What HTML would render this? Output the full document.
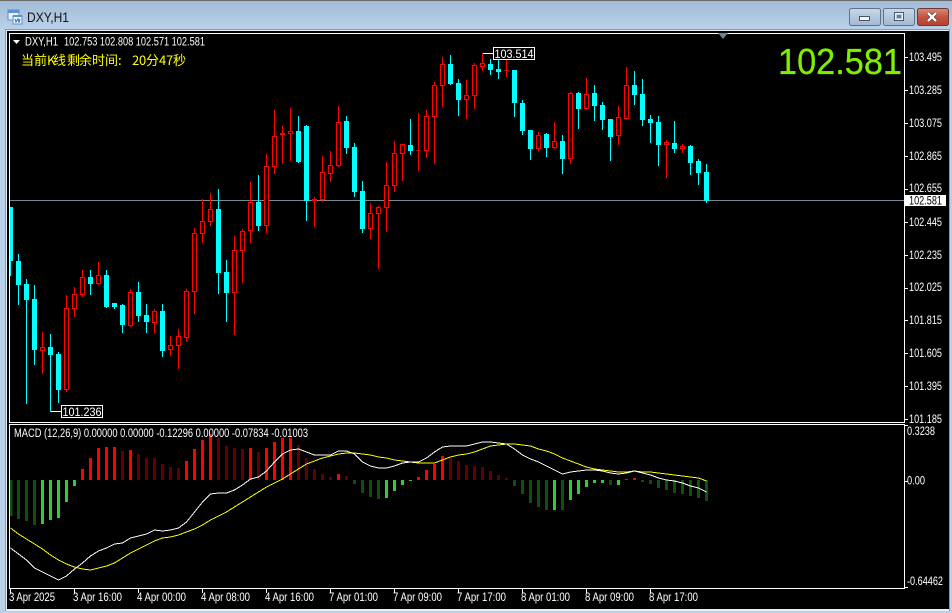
<!DOCTYPE html>
<html>
<head>
<meta charset="utf-8">
<title>DXY,H1</title>
<style>
html,body{margin:0;padding:0;background:#b8d0e8;}
svg{display:block;}
text{font-family:"Liberation Sans","Noto Sans CJK SC",sans-serif;}
</style>
</head>
<body>
<svg width="952" height="613" viewBox="0 0 952 613" xmlns="http://www.w3.org/2000/svg">
<defs>
<linearGradient id="tb" x1="0" y1="0" x2="0" y2="1"><stop offset="0" stop-color="#a2bbd6"/><stop offset="1" stop-color="#b9d1e9"/></linearGradient>
<linearGradient id="btn" x1="0" y1="0" x2="0" y2="1"><stop offset="0" stop-color="#c9d8e8"/><stop offset=".5" stop-color="#b4c8dc"/><stop offset="1" stop-color="#a0b8d2"/></linearGradient>
<linearGradient id="cls" x1="0" y1="0" x2="0" y2="1"><stop offset="0" stop-color="#d98a7a"/><stop offset=".5" stop-color="#c4533f"/><stop offset="1" stop-color="#b8402e"/></linearGradient>
</defs>
<rect width="952" height="613" fill="#b8d0e8"/>
<rect width="952" height="30" fill="url(#tb)"/>
<rect width="952" height="1" fill="#6c6c6c"/>
<rect x="5" y="29" width="945" height="582" fill="#8e9aa6"/>
<rect x="6" y="30" width="943" height="581" fill="#e8eef4"/>
<rect x="7" y="31" width="942" height="578" fill="#000"/>

<!-- title icon -->
<g shape-rendering="crispEdges">
<rect x="8" y="10" width="11" height="10" fill="#e6f0fb" stroke="#5b93cf"/>
<rect x="8" y="10" width="11" height="3" fill="#5b93cf"/>
<rect x="13" y="16" width="9" height="8" fill="#f2f7fd" stroke="#5b93cf"/>
<rect x="13" y="15" width="9" height="2" fill="#5b93cf"/>
<path d="M15 19l1 3 2-3 1 3 1-3" fill="none" stroke="#3c78b8"/>
</g>
<text x="27" y="22" font-size="14" fill="#141414" textLength="42" lengthAdjust="spacingAndGlyphs">DXY,H1</text>

<!-- window buttons -->
<rect x="849.5" y="8.5" width="31" height="17" rx="2" fill="url(#btn)" stroke="#5f7289"/>
<rect x="859.5" y="16.5" width="10" height="4" fill="#f2f5f8" stroke="#48586a"/>
<rect x="883.5" y="8.5" width="31" height="17" rx="2" fill="url(#btn)" stroke="#5f7289"/>
<rect x="894.5" y="12.5" width="9" height="8" fill="none" stroke="#48586a" stroke-width="1"/>
<rect x="895.5" y="13.5" width="7" height="6" fill="none" stroke="#f2f5f8" stroke-width="1"/>
<rect x="897" y="15" width="4" height="3" fill="#6b7d90"/>
<rect x="917.5" y="8.5" width="31" height="17" rx="2" fill="url(#cls)" stroke="#6e3a34"/>
<path d="M928 13l8 8M936 13l-8 8" stroke="#4d2a26" stroke-width="3.6"/>
<path d="M928 13l8 8M936 13l-8 8" stroke="#fff" stroke-width="2.4"/>

<g shape-rendering="crispEdges">
<!-- price line -->
<path d="M10 200.5H904" stroke="#778899" fill="none"/>

<!-- MACD histogram -->
<g fill="none" stroke-width="3">
<path stroke="#0f500f" d="M11 480V516M18.5 480V519M26.5 480V521M34.5 480V525M354.5 480V484M362.5 480V493M370.5 480V497M378.5 480V499M514.5 480V486M522.5 480V494M530.5 480V503M538.5 480V507M546.5 480V510M562.5 480V510M610.5 480V485M642.5 480V482M650.5 480V484M658.5 480V488M666.5 480V490M674.5 480V493M682.5 480V494M690.5 480V496M698.5 480V498M706.5 480V501"/>
<path stroke="#32cd32" d="M42.5 480V524M50.5 480V520M58.5 480V518M66.5 480V502M74.5 480V486M386.5 480V498M394.5 480V491M402.5 480V485M410.5 480V481M554.5 480V510M570.5 480V500M578.5 480V494M586.5 480V487M594.5 480V483M602.5 480V483M618.5 480V485"/>
<path stroke="#ff0000" d="M82.5 480V469M90.5 480V458M98.5 480V448M106.5 480V447M114.5 480V447M130.5 480V450M186.5 480V461M194.5 480V449M202.5 480V440M210.5 480V434M250.5 480V448M266.5 480V448M274.5 480V442M282.5 480V438M290.5 480V438M338.5 480V474M418.5 480V477M426.5 480V470M434.5 480V464M442.5 480V456M626.5 480V479M634.5 480V478"/>
<path stroke="#620000" d="M122.5 480V451M138.5 480V454M146.5 480V458M154.5 480V458M162.5 480V464M170.5 480V467M178.5 480V468M218.5 480V438M226.5 480V446M234.5 480V448M242.5 480V449M258.5 480V452M298.5 480V445M306.5 480V458M314.5 480V469M322.5 480V474M330.5 480V477M346.5 480V476M450.5 480V458M458.5 480V461M466.5 480V465M474.5 480V466M482.5 480V467M490.5 480V471M498.5 480V475M506.5 480V478"/>
</g>
<!-- MACD lines -->
<polyline fill="none" stroke="#ffff00" points="10.5,528 18.5,534 26.5,539 34.5,544 42.5,549 50.5,555 58.5,560 66.5,564 74.5,567 82.5,569 90.5,570 98.5,568 106.5,566 114.5,563 122.5,558 130.5,553 138.5,549 146.5,545 154.5,541 162.5,538 170.5,537 178.5,535 186.5,532 194.5,529 202.5,525 210.5,520 218.5,516 226.5,512 234.5,507 242.5,502 250.5,497 258.5,492 266.5,487 274.5,483 282.5,479 290.5,474 298.5,469 306.5,464 314.5,461 322.5,458 330.5,456 338.5,454 346.5,453 354.5,453 362.5,454 370.5,455 378.5,457 386.5,458 394.5,460 402.5,461 410.5,462 418.5,463 426.5,463 434.5,463 442.5,460 450.5,457 458.5,455 466.5,454 474.5,452 482.5,449 490.5,446 498.5,445 506.5,444 514.5,444 522.5,445 530.5,446 538.5,449 546.5,451 554.5,454 562.5,458 570.5,461 578.5,464 586.5,467 594.5,469 602.5,470 610.5,471 618.5,472 626.5,472 634.5,471 642.5,472 650.5,472 658.5,473 666.5,474 674.5,475 682.5,476 690.5,477 698.5,478 706.5,481"/>
<polyline fill="none" stroke="#ffffff" points="10.5,548 18.5,554 26.5,560 34.5,568 42.5,572 50.5,576 58.5,580 66.5,576 74.5,569 82.5,563 90.5,556 98.5,551 106.5,548 114.5,544 122.5,543 130.5,538 138.5,536 146.5,534 154.5,530 162.5,531 170.5,530 178.5,528 186.5,522 194.5,512 202.5,502 210.5,494 218.5,493 226.5,493 234.5,490 242.5,485 250.5,479 258.5,477 266.5,471 274.5,462 282.5,454 290.5,450 298.5,449 306.5,452 314.5,455 322.5,455 330.5,455 338.5,451 346.5,451 354.5,454 362.5,462 370.5,466 378.5,468 386.5,468 394.5,466 402.5,463 410.5,462 418.5,462 426.5,458 434.5,452 442.5,447 450.5,446 458.5,446 466.5,446 474.5,444 482.5,442 490.5,442 498.5,443 506.5,444 514.5,449 522.5,455 530.5,459 538.5,462 546.5,466 554.5,470 562.5,474 570.5,472 578.5,471 586.5,470 594.5,470 602.5,471 610.5,473 618.5,474 626.5,473 634.5,471 642.5,473 650.5,475 658.5,478 666.5,480 674.5,481 682.5,483 690.5,486 698.5,488 706.5,492"/>

<!-- leader lines for high/low labels -->
<path d="M482.5 53.5H494M50.5 411.5H62" stroke="#fff" fill="none"/>

<!-- red wicks -->
<path fill="none" stroke="#ff0000" d="M42.5 332V374M66.5 295V392M74.5 287V317M82.5 270V297M98.5 262V285M130.5 289V327M154.5 309V333M170.5 336V356M178.5 329V369M186.5 289V342M194.5 228V314M202.5 199V243M210.5 193V226M234.5 236V335M242.5 229V283M250.5 182V243M266.5 154V233M274.5 110V174M282.5 126V164M290.5 108V161M314.5 197V227M322.5 156V202M330.5 151V182M338.5 106V167M370.5 203V239M378.5 206V269M386.5 162V232M394.5 141V192M402.5 144V181M418.5 113V171M426.5 110V158M434.5 82V164M442.5 57V107M466.5 80V119M474.5 63V109M482.5 53V71M506.5 57V77M538.5 132V151M554.5 122V149M570.5 92V164M586.5 78V110M618.5 106V145M626.5 67V120M666.5 140V178M682.5 144V153"/>
<!-- red bodies -->
<path fill="#000" stroke="#ff0000" d="M40.5 347.5h4V350.5h-4zM64.5 308.5h4V389.5h-4zM72.5 294.5h4V308.5h-4zM80.5 277.5h4V294.5h-4zM96.5 275.5h4V283.5h-4zM128.5 292.5h4V325.5h-4zM152.5 311.5h4V322.5h-4zM168.5 345.5h4V349.5h-4zM176.5 336.5h4V345.5h-4zM184.5 291.5h4V337.5h-4zM192.5 233.5h4V291.5h-4zM200.5 221.5h4V233.5h-4zM208.5 209.5h4V221.5h-4zM232.5 250.5h4V292.5h-4zM240.5 231.5h4V250.5h-4zM248.5 202.5h4V230.5h-4zM264.5 166.5h4V225.5h-4zM272.5 136.5h4V166.5h-4zM280.5 133.5h4V134.5h-4zM288.5 131.5h4V133.5h-4zM312.5 199.5h4V200.5h-4zM320.5 172.5h4V199.5h-4zM328.5 165.5h4V173.5h-4zM336.5 122.5h4V165.5h-4zM368.5 213.5h4V228.5h-4zM376.5 207.5h4V213.5h-4zM384.5 185.5h4V207.5h-4zM392.5 153.5h4V185.5h-4zM400.5 144.5h4V153.5h-4zM416.5 150.5h4V150.5h-4zM424.5 116.5h4V150.5h-4zM432.5 85.5h4V116.5h-4zM440.5 64.5h4V85.5h-4zM464.5 95.5h4V99.5h-4zM472.5 65.5h4V95.5h-4zM480.5 63.5h4V66.5h-4zM504.5 70.5h4V70.5h-4zM536.5 135.5h4V148.5h-4zM552.5 141.5h4V147.5h-4zM568.5 93.5h4V158.5h-4zM584.5 94.5h4V108.5h-4zM616.5 117.5h4V135.5h-4zM624.5 85.5h4V118.5h-4zM664.5 142.5h4V144.5h-4zM680.5 146.5h4V148.5h-4z"/>
<!-- cyan wicks -->
<path fill="none" stroke="#00ffff" d="M10.5 207V276M18.5 254V305M26.5 279V404M34.5 285V365M50.5 334V412M58.5 352V403M90.5 270V295M106.5 270V308M114.5 303V309M122.5 304V333M138.5 282V322M146.5 304V333M162.5 304V357M218.5 189V294M226.5 260V322M258.5 175V231M298.5 116V163M306.5 125V221M346.5 116V154M354.5 143V197M362.5 181V233M410.5 119V155M450.5 55V85M458.5 79V116M490.5 59V75M498.5 59V79M514.5 70V117M522.5 100V135M530.5 130V160M546.5 133V157M562.5 135V174M578.5 92V129M594.5 85V121M602.5 102V130M610.5 119V161M634.5 71V105M642.5 79V126M650.5 115V143M658.5 116V166M674.5 121V153M690.5 145V175M698.5 159V185M706.5 164V203"/>
<!-- cyan bodies -->
<path fill="#00ffff" d="M10 207h3V261h-3zM16 261h5V285h-5zM24 284h5V300h-5zM32 299h5V350h-5zM48 347h5V355h-5zM56 354h5V390h-5zM88 277h5V284h-5zM104 275h5V307h-5zM112 303h5V307h-5zM120 305h5V325h-5zM136 292h5V316h-5zM144 315h5V322h-5zM160 311h5V351h-5zM216 209h5V273h-5zM224 272h5V293h-5zM256 202h5V226h-5zM296 131h5V162h-5zM304 126h5V201h-5zM344 121h5V148h-5zM352 147h5V192h-5zM360 191h5V229h-5zM408 145h5V151h-5zM448 64h5V84h-5zM456 83h5V100h-5zM488 64h5V70h-5zM496 69h5V72h-5zM512 70h5V103h-5zM520 103h5V131h-5zM528 130h5V149h-5zM544 134h5V148h-5zM560 141h5V159h-5zM576 93h5V109h-5zM592 93h5V106h-5zM600 105h5V120h-5zM608 119h5V137h-5zM632 85h5V95h-5zM640 94h5V120h-5zM648 119h5V123h-5zM656 122h5V145h-5zM672 143h5V149h-5zM688 146h5V163h-5zM696 161h5V173h-5zM704 172h5V201h-5z"/>

<!-- frames -->
<path fill="none" stroke="#fff" d="M9.5 33.5H904.5V422.5H9.5zM9.5 424.5H904.5V588.5H9.5z"/>
<!-- price ticks -->
<path fill="none" stroke="#fff" d="M905 57.5h3M905 90.5h3M905 123.5h3M905 156.5h3M905 189.5h3M905 222.5h3M905 255.5h3M905 288.5h3M905 320.5h3M905 353.5h3M905 386.5h3M905 419.5h3M905 425.5h3M905 481.5h3M905 587.5h3"/>
<!-- time ticks -->
<path fill="none" stroke="#fff" d="M10.5 589v4M74.5 589v4M138.5 589v4M202.5 589v4M266.5 589v4M330.5 589v4M394.5 589v4M458.5 589v4M522.5 589v4M586.5 589v4M650.5 589v4"/>
<!-- label boxes -->
<rect x="493.5" y="47.5" width="41" height="12" fill="#000" stroke="#fff"/>
<rect x="61.5" y="405.5" width="41" height="12" fill="#000" stroke="#fff"/>
<rect x="905" y="195" width="41" height="11" fill="#fff"/>
</g>

<polygon points="13,40 20,40 16.5,44" fill="#fff"/>
<polygon points="718,33 728,33 723,39" fill="#6f8296"/>

<g fill="#fff" font-size="11.5">
<text x="25" y="45.5" textLength="33" lengthAdjust="spacingAndGlyphs">DXY,H1</text>
<text x="64" y="45.5" textLength="141" lengthAdjust="spacingAndGlyphs">102.753 102.808 102.571 102.581</text>
<text x="14" y="437" textLength="294" lengthAdjust="spacingAndGlyphs">MACD (12,26,9) 0.00000 0.00000 -0.12296 0.00000 -0.07834 -0.01003</text>

<text x="494.5" y="58" font-size="12" textLength="39" lengthAdjust="spacingAndGlyphs">103.514</text>
<text x="62.5" y="416" font-size="12" textLength="39" lengthAdjust="spacingAndGlyphs">101.236</text>

<text x="909" y="61" textLength="33" lengthAdjust="spacingAndGlyphs">103.495</text>
<text x="909" y="94" textLength="33" lengthAdjust="spacingAndGlyphs">103.285</text>
<text x="909" y="127" textLength="33" lengthAdjust="spacingAndGlyphs">103.075</text>
<text x="909" y="160" textLength="33" lengthAdjust="spacingAndGlyphs">102.865</text>
<text x="909" y="192" textLength="33" lengthAdjust="spacingAndGlyphs">102.655</text>
<text x="909" y="226" textLength="33" lengthAdjust="spacingAndGlyphs">102.445</text>
<text x="909" y="259" textLength="33" lengthAdjust="spacingAndGlyphs">102.235</text>
<text x="909" y="291" textLength="33" lengthAdjust="spacingAndGlyphs">102.025</text>
<text x="909" y="324" textLength="33" lengthAdjust="spacingAndGlyphs">101.815</text>
<text x="909" y="357" textLength="33" lengthAdjust="spacingAndGlyphs">101.605</text>
<text x="909" y="390" textLength="33" lengthAdjust="spacingAndGlyphs">101.395</text>
<text x="909" y="423" textLength="33" lengthAdjust="spacingAndGlyphs">101.185</text>

<text x="907" y="435" textLength="28" lengthAdjust="spacingAndGlyphs">0.3238</text>
<text x="907" y="484.5" textLength="18" lengthAdjust="spacingAndGlyphs">0.00</text>
<text x="907" y="585" textLength="36" lengthAdjust="spacingAndGlyphs">-0.64462</text>

<text x="9" y="601" textLength="46" lengthAdjust="spacingAndGlyphs">3 Apr 2025</text>
<text x="73" y="601" textLength="49" lengthAdjust="spacingAndGlyphs">3 Apr 16:00</text>
<text x="137" y="601" textLength="49" lengthAdjust="spacingAndGlyphs">4 Apr 00:00</text>
<text x="201" y="601" textLength="49" lengthAdjust="spacingAndGlyphs">4 Apr 08:00</text>
<text x="265" y="601" textLength="49" lengthAdjust="spacingAndGlyphs">4 Apr 16:00</text>
<text x="329" y="601" textLength="49" lengthAdjust="spacingAndGlyphs">7 Apr 01:00</text>
<text x="393" y="601" textLength="49" lengthAdjust="spacingAndGlyphs">7 Apr 09:00</text>
<text x="457" y="601" textLength="49" lengthAdjust="spacingAndGlyphs">7 Apr 17:00</text>
<text x="521" y="601" textLength="49" lengthAdjust="spacingAndGlyphs">8 Apr 01:00</text>
<text x="585" y="601" textLength="49" lengthAdjust="spacingAndGlyphs">8 Apr 09:00</text>
<text x="649" y="601" textLength="49" lengthAdjust="spacingAndGlyphs">8 Apr 17:00</text>
</g>
<text x="909" y="204.5" font-size="11.5" fill="#000" textLength="33" lengthAdjust="spacingAndGlyphs">102.581</text>

<text y="65" font-size="13" fill="#ffff00" style="font-family:'WenQuanYi Zen Hei','Noto Sans CJK SC',sans-serif" x="21 34 47 53 67 79 92 105 118 132 139 146 159 166 173">当前K线剩余时间:20分47秒</text>

<text x="778" y="74" font-size="36" fill="#7cf000" stroke="#7cf000" stroke-width=".3" textLength="124" lengthAdjust="spacingAndGlyphs">102.581</text>
</svg>
</body>
</html>
